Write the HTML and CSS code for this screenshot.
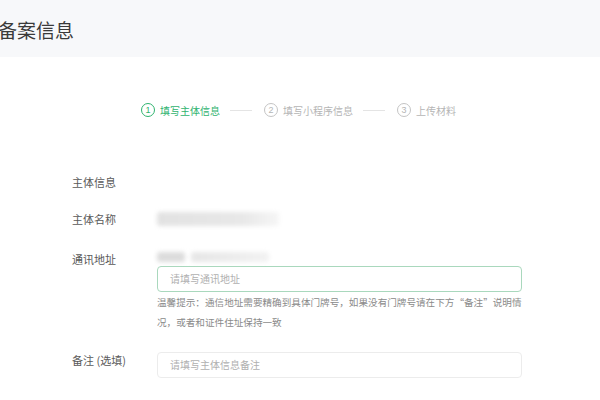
FILE: index.html
```html
<!DOCTYPE html>
<html lang="zh">
<head>
  <meta charset="utf-8">
  <title>备案信息</title>
  <link rel="stylesheet" href="styles.css">
</head>
<body>
  <div class="header">
    <div class="title">备案信息</div>
  </div>

  <!-- progress of the filing -->
  <div class="steps">
    <div class="step active"><span class="num">1</span>填写主体信息</div>
    <div class="line"></div>
    <div class="step"><span class="num">2</span>填写小程序信息</div>
    <div class="line"></div>
    <div class="step"><span class="num">3</span>上传材料</div>
  </div>

  <div class="form">
    <div class="row">
      <div class="label">主体信息</div>
    </div>
    <div class="row row-name">
      <div class="label">主体名称</div>
      <div class="value">
        <div class="blur blur-name"></div>
      </div>
    </div>
    <div class="row row-addr">
      <div class="label">通讯地址</div>
      <div class="value">
        <div class="blur-pair">
          <div class="blur blur-a"></div>
          <div class="blur blur-b"></div>
        </div>
        <div class="input focus">请填写通讯地址</div>
        <div class="hint">温馨提示：通信地址需要精确到具体门牌号，如果没有门牌号请在下方“备注”说明情况，或者和证件住址保持一致</div>
      </div>
    </div>
    <div class="row row-note">
      <div class="label">备注 (选填)</div>
      <div class="value">
        <div class="input">请填写主体信息备注</div>
      </div>
    </div>
  </div>
</body>
</html>
```

FILE: styles.css
```css
body {
  margin: 0;
  background-color: #ffffff;
  font-family: "Noto Sans CJK SC", "Noto Sans", sans-serif;
  color: #555;
}

.header {
  height: 57px;
  background-color: #f7f8fa;
  display: flex;
  align-items: center;
}

.title {
  margin-left: -2px;
  margin-top: 1px;
  font-size: 19px;
  color: #3a3a3a;
}

.steps {
  display: flex;
  align-items: center;
  height: 20px;
  margin-top: 43px;
  padding-left: 141px;
  font-size: 10px;
  color: #b5b5b5;
}

.step {
  display: flex;
  align-items: center;
  white-space: nowrap;
}

.num {
  width: 12px;
  height: 12px;
  border: 1px solid #c4c4c4;
  border-radius: 50%;
  font-size: 9px;
  line-height: 12px;
  text-align: center;
  margin-right: 5px;
  font-family: "Liberation Sans", sans-serif;
}

.step.active {
  color: #2fb36e;
}

.step.active .num {
  border-color: #2fb36e;
}

.line {
  width: 22px;
  height: 1px;
  background-color: #e4e4e4;
  margin: 0 12px 0 10px;
}

.form {
  margin-top: 52px;
  padding-left: 72px;
}

.row {
  display: flex;
}

.label {
  width: 85px;
  flex: none;
  font-size: 11px;
  line-height: 20px;
  color: #5a5a5a;
}

.value {
  width: 365px;
}

.row-name {
  margin-top: 17px;
}

.row-addr {
  margin-top: 20px;
}

.row-note {
  margin-top: 20px;
}

.row-note .label {
  line-height: 16px;
}

.blur {
  filter: blur(2px);
  border-radius: 3px;
}

.blur-name {
  width: 122px;
  height: 14px;
  margin-top: 3px;
  background: linear-gradient(to right, #e2e2e2, #e8e8e8 70%, #f6f6f6);
}

.blur-pair {
  display: flex;
  gap: 6px;
  margin-top: 3px;
}

.blur-a {
  width: 28px;
  height: 10px;
  background-color: #dcdcdc;
}

.blur-b {
  width: 78px;
  height: 10px;
  background: linear-gradient(to right, #e6e6e6, #f2f2f2);
}

.input {
  box-sizing: border-box;
  height: 26px;
  border: 1px solid #ececec;
  border-radius: 4px;
  padding-left: 12px;
  font-size: 10px;
  line-height: 24px;
  color: #b0b0b0;
}

.input.focus {
  margin-top: 4px;
  border-color: #a9d8bd;
}

.hint {
  width: 372px;
  font-size: 9.6px;
  line-height: 20px;
  color: #8a8a8a;
}
```
